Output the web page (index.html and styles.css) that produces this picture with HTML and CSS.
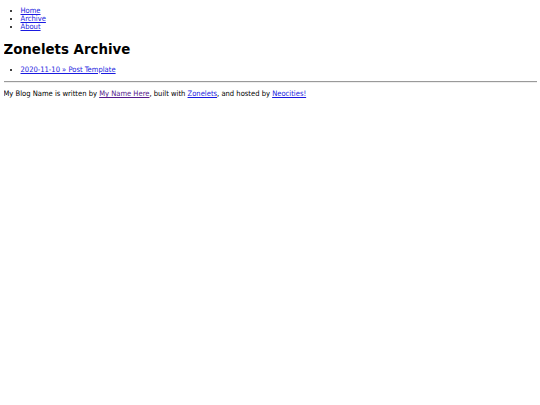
FILE: index.html
```html
<!DOCTYPE html>
<html>
<head>
<meta charset="utf-8">
<title>Zonelets Archive</title>
<link rel="stylesheet" href="styles.css">
</head>
<body>
<div class="page">
<header>
<nav>
<ul class="menu">
<li><a href="#">Home</a></li>
<li><a href="#">Archive</a></li>
<li><a href="#">About</a></li>
</ul>
</nav>
</header>
<main>
<h1>Zonelets Archive</h1>
<ul class="posts">
<li><a href="#">2020-11-10 » Post Template</a></li>
</ul>
</main>
<footer>
<hr>
<p>My Blog Name is written by <a class="visited" href="#">My Name Here</a>, built with <a href="#">Zonelets</a>, and hosted by <a href="#">Neocities!</a></p>
</footer>
</div>
</body>
</html>
```

FILE: styles.css
```css
html {
  background: #ffffff;
}
body {
  margin: 3.5px;
  font-family: "DejaVu Sans Condensed", "DejaVu Sans", sans-serif;
  font-stretch: condensed;
  font-size: 7.55px;
  line-height: 8.1px;
  color: #000000;
}
a {
  color: #1a1ae0;
}
a.visited {
  color: #551a8b;
}
ul {
  margin: 7px 0;
  padding-left: 17px;
}
.menu {
  margin-top: 3.5px;
}
h1 {
  font-size: 14.85px;
  line-height: 16px;
  margin: 9.4px 0;
}
hr {
  margin: 3.5px 0;
  border: none;
  border-top: 0.5px solid #9a9a9a;
  border-bottom: 0.5px solid #eeeeee;
}
p {
  margin: 7px 0;
}
```
